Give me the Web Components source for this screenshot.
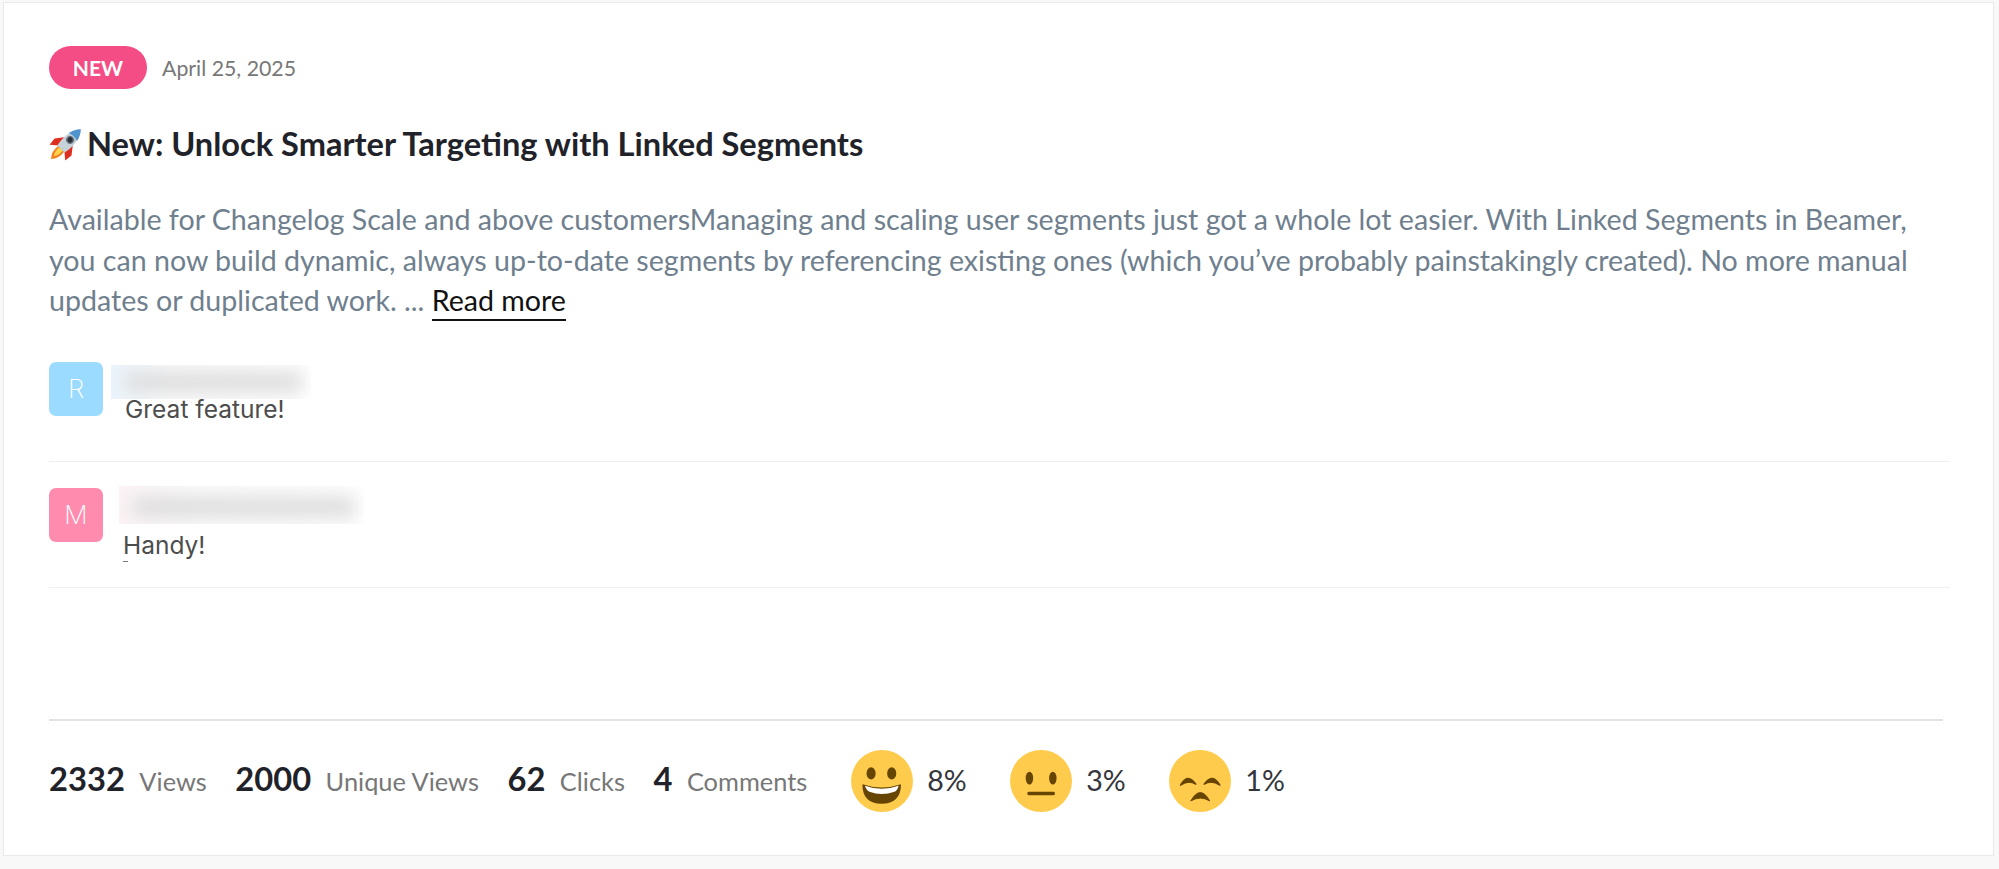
<!DOCTYPE html>
<html>
<head>
<meta charset="utf-8">
<title>Post</title>
<style>
html, body { margin: 0; height: 100%; background: #f8f8f8; }
body { font-family: "Lato", sans-serif; }
</style>
</head>
<body>
<post-card>
  <post-head slot="head" date="April 25, 2025">NEW</post-head>
  <post-title slot="head">New: Unlock Smarter Targeting with Linked Segments</post-title>
  <post-text slot="head">Available for Changelog Scale and above customersManaging and scaling user segments just got a whole lot easier. With Linked Segments in Beamer, you can now build dynamic, always up-to-date segments by referencing existing ones (which you’ve probably painstakingly created). No more manual updates or duplicated work. ... <a>Read more</a></post-text>
  <post-comment slot="comments" letter="R" color="#9bdbff" blur="200" inset="0">Great feature!</post-comment>
  <post-comment slot="comments" letter="M" color="#ff8cae" blur="245" inset="8" cut>Handy!</post-comment>
  <post-stat slot="stats" value="2332">Views</post-stat>
  <post-stat slot="stats" value="2000">Unique Views</post-stat>
  <post-stat slot="stats" value="62">Clicks</post-stat>
  <post-stat slot="stats" value="4">Comments</post-stat>
  <post-reaction slot="reactions" kind="happy">8%</post-reaction>
  <post-reaction slot="reactions" kind="neutral">3%</post-reaction>
  <post-reaction slot="reactions" kind="sad">1%</post-reaction>
</post-card>

<script>
class PostCard extends HTMLElement {
    constructor() {
        super();
        this.attachShadow({mode: 'open'});
        this.shadowRoot.innerHTML = `
<style>
:host {
    display: block;
    box-sizing: border-box;
    width: 1991px;
    height: 854px;
    margin: 2px 0 0 3px;
    border: solid 1px #e9e9e9;
    background: #fff;
    padding: 43px 0 0 45px;
}
.wrap { display: flex; flex-direction: column; height: 100%; }
.comments { display: flex; flex-direction: column; width: 1901px; margin-top: 41px; }
.stats {
    margin-top: auto;
    width: 1894px;
    height: 136px;
    box-sizing: border-box;
    border-top: solid 2px #e3e3e3;
    display: flex;
    align-items: center;
    padding-bottom: 14px;
}
.counts { display: flex; gap: 28.5px; margin-bottom: 5px; }
.reactions { display: flex; gap: 43.5px; margin-left: 44px; }
</style>
<div class="wrap">
  <slot name="head"></slot>
  <div class="comments"><slot name="comments"></slot></div>
  <div class="stats">
    <div class="counts"><slot name="stats"></slot></div>
    <div class="reactions"><slot name="reactions"></slot></div>
  </div>
</div>`;
    }
}

class PostHead extends HTMLElement {
    constructor() {
        super();
        this.attachShadow({mode: 'open'});
    }
    connectedCallback() {
        this.shadowRoot.innerHTML = `
<style>
:host { display: flex; align-items: center; gap: 15px; }
.badge {
    width: 98px;
    height: 43px;
    border-radius: 22px;
    background: #f44c84;
    color: #fff;
    font: 700 21px "Lato", sans-serif;
    display: flex;
    align-items: center;
    justify-content: center;
}
.date { color: #777; font: 400 21.3px "Lato", sans-serif; }
</style>
<span class="badge"><slot></slot></span>
<span class="date">${this.getAttribute("date")}</span>`;
    }
}

class PostTitle extends HTMLElement {
    constructor() {
        super();
        this.attachShadow({mode: 'open'});
        this.shadowRoot.innerHTML = `
<style>
:host {
    display: flex;
    align-items: center;
    gap: 4px;
    margin-top: 35px;
    color: #1f2329;
    font: 700 32.6px/40px "Lato", sans-serif;
}
svg { width: 34px; height: 32px; flex: none; }
</style>
<svg viewBox="0 0 34 32" style="overflow: visible">
  <g transform="rotate(45 19 14)">
    <path d="M15 23 Q13.500 32 19 38 Q24.500 32 23 23 Z" fill="#f4811f"/>
    <path d="M16.500 24 Q16 30 19 34 Q22 30 21.500 24 Z" fill="#fcd34a"/>
    <path d="M14 12 L7 21 L8 29 L15 23 Z" fill="#dd2e1f"/>
    <path d="M24 12 L31 21 L30 29 L23 23 Z" fill="#dd2e1f"/>
    <path d="M19 -4 C26 3 26 16 24 24 L14 24 C12 16 12 3 19 -4 Z" fill="#c6d2da"/>
    <path d="M19 -4 C22 -1 24 3 24.700 7 Q19 5 13.300 7 C14 3 16 -1 19 -4 Z" fill="#4f93cf"/>
    <circle cx="19" cy="11" r="4" fill="#66747f"/>
    <circle cx="19" cy="11" r="2.600" fill="#2a2f36"/>
  </g>
</svg>
<span><slot></slot></span>`;
    }
}

class PostText extends HTMLElement {
    constructor() {
        super();
        this.attachShadow({mode: 'open'});
        this.shadowRoot.innerHTML = `
<style>
:host {
    display: block;
    width: 1885px;
    margin-top: 35px;
    color: #6f7f8e;
    font: 400 28.6px/40.5px "Lato", sans-serif;
}
::slotted(a) {
    color: #111;
    border-bottom: solid 2px #111;
    padding-bottom: 2px;
}
</style>
<slot></slot>`;
    }
}

class PostComment extends HTMLElement {
    constructor() {
        super();
        this.attachShadow({mode: 'open'});
    }
    connectedCallback() {
        let inset = this.getAttribute("inset");
        let cut = this.hasAttribute("cut");
        this.shadowRoot.innerHTML = `
<style>
:host {
    display: flex;
    gap: 8px;
    height: 100px;
    margin-bottom: 26px;
    box-sizing: border-box;
    border-bottom: solid 1px #f0f0f0;
}
.avatar {
    width: 54px;
    height: 54px;
    border-radius: 7px;
    background: ${this.getAttribute("color")};
    color: #fff;
    font: 200 26px "Inter", sans-serif;
    display: flex;
    align-items: center;
    justify-content: center;
    flex: none;
}
.body { margin-left: ${inset}px; }
.name {
    width: ${this.getAttribute("blur")}px;
    height: ${cut ? 38 : 34}px;
    margin-top: ${cut ? -2 : 3}px;
    overflow: hidden;
    background: linear-gradient(90deg, ${cut ? "#fbf3f5" : "#eaf4fc"}, #fafafa 30%, #fcfcfc 92%, #fff);
}
.name i {
    display: block;
    height: 18px;
    margin: ${cut ? 12 : 8}px 9px 0 14px;
    background: #dadada;
    filter: blur(9px);
}
.msg {
    margin: ${cut ? 5 : -6}px 0 0 ${cut ? 4 : 14}px;
    color: #4d4d4d;
    font: 400 24.5px/32px "Inter", sans-serif;
}
.dash { width: 5px; height: 1px; background: #777; margin: 0 0 0 4px; }
</style>
<span class="avatar">${this.getAttribute("letter")}</span>
<div class="body">
  <div class="name"><i></i></div>
  <div class="msg"><slot></slot></div>
  ${cut ? '<div class="dash"></div>' : ''}
</div>`;
    }
}

class PostStat extends HTMLElement {
    constructor() {
        super();
        this.attachShadow({mode: 'open'});
    }
    connectedCallback() {
        this.shadowRoot.innerHTML = `
<style>
:host { display: flex; align-items: baseline; gap: 14.5px; }
b { color: #1f2329; font: 700 32.7px "Lato", sans-serif; }
span { color: #777; font: 400 25.4px "Lato", sans-serif; }
</style>
<b>${this.getAttribute("value")}</b>
<span><slot></slot></span>`;
    }
}

const FACES = {
    happy: `<ellipse cx="21.700" cy="25.300" rx="4.900" ry="6.700" fill="#664500"/><ellipse cx="44" cy="25.300" rx="4.900" ry="6.700" fill="#664500"/>
      <path d="M12.300 37 Q33 44 54 37 Q54 58 33 58 Q12.300 58 12.300 37 Z" fill="#664500"/>
      <path d="M15 38.500 Q33 45 51.500 38.500 Q50 44 47 45 Q33 50 20 45 Q17 44 15 38.500 Z" fill="#fff"/>`,
    neutral: `<ellipse cx="21" cy="30.400" rx="4" ry="6.900" fill="#664500"/><ellipse cx="46.300" cy="30.400" rx="4" ry="6.900" fill="#664500"/>
      <rect x="18.800" y="45" width="29.700" height="4" rx="1.500" fill="#664500"/>`,
    sad: `<path d="M12.500 38 Q20 24 29 37 Q21 32 12.500 38 Z" fill="#664500" stroke="#664500" stroke-width="1.500" stroke-linejoin="round"/>
      <path d="M38 37 Q47 24 55 38 Q46 32 38 37 Z" fill="#664500" stroke="#664500" stroke-width="1.500" stroke-linejoin="round"/>
      <path d="M23.500 55 Q34 37 44 55 Q34 49 23.500 55 Z" fill="#664500" stroke="#664500" stroke-width="1" stroke-linejoin="round"/>`
};

class PostReaction extends HTMLElement {
    constructor() {
        super();
        this.attachShadow({mode: 'open'});
    }
    connectedCallback() {
        this.shadowRoot.innerHTML = `
<style>
:host {
    display: flex;
    align-items: center;
    gap: 14px;
    color: #33363b;
    font: 400 28.6px "Lato", sans-serif;
}
svg { width: 62px; height: 62px; }
span { margin-bottom: 2px; }
</style>
<svg viewBox="0 0 67 67"><circle cx="33.500" cy="33.500" r="33.500" fill="#ffcb4c"/>${FACES[this.getAttribute("kind")]}</svg>
<span><slot></slot></span>`;
    }
}

window.customElements.define("post-card", PostCard);
window.customElements.define("post-head", PostHead);
window.customElements.define("post-title", PostTitle);
window.customElements.define("post-text", PostText);
window.customElements.define("post-comment", PostComment);
window.customElements.define("post-stat", PostStat);
window.customElements.define("post-reaction", PostReaction);
</script>
</body>
</html>
